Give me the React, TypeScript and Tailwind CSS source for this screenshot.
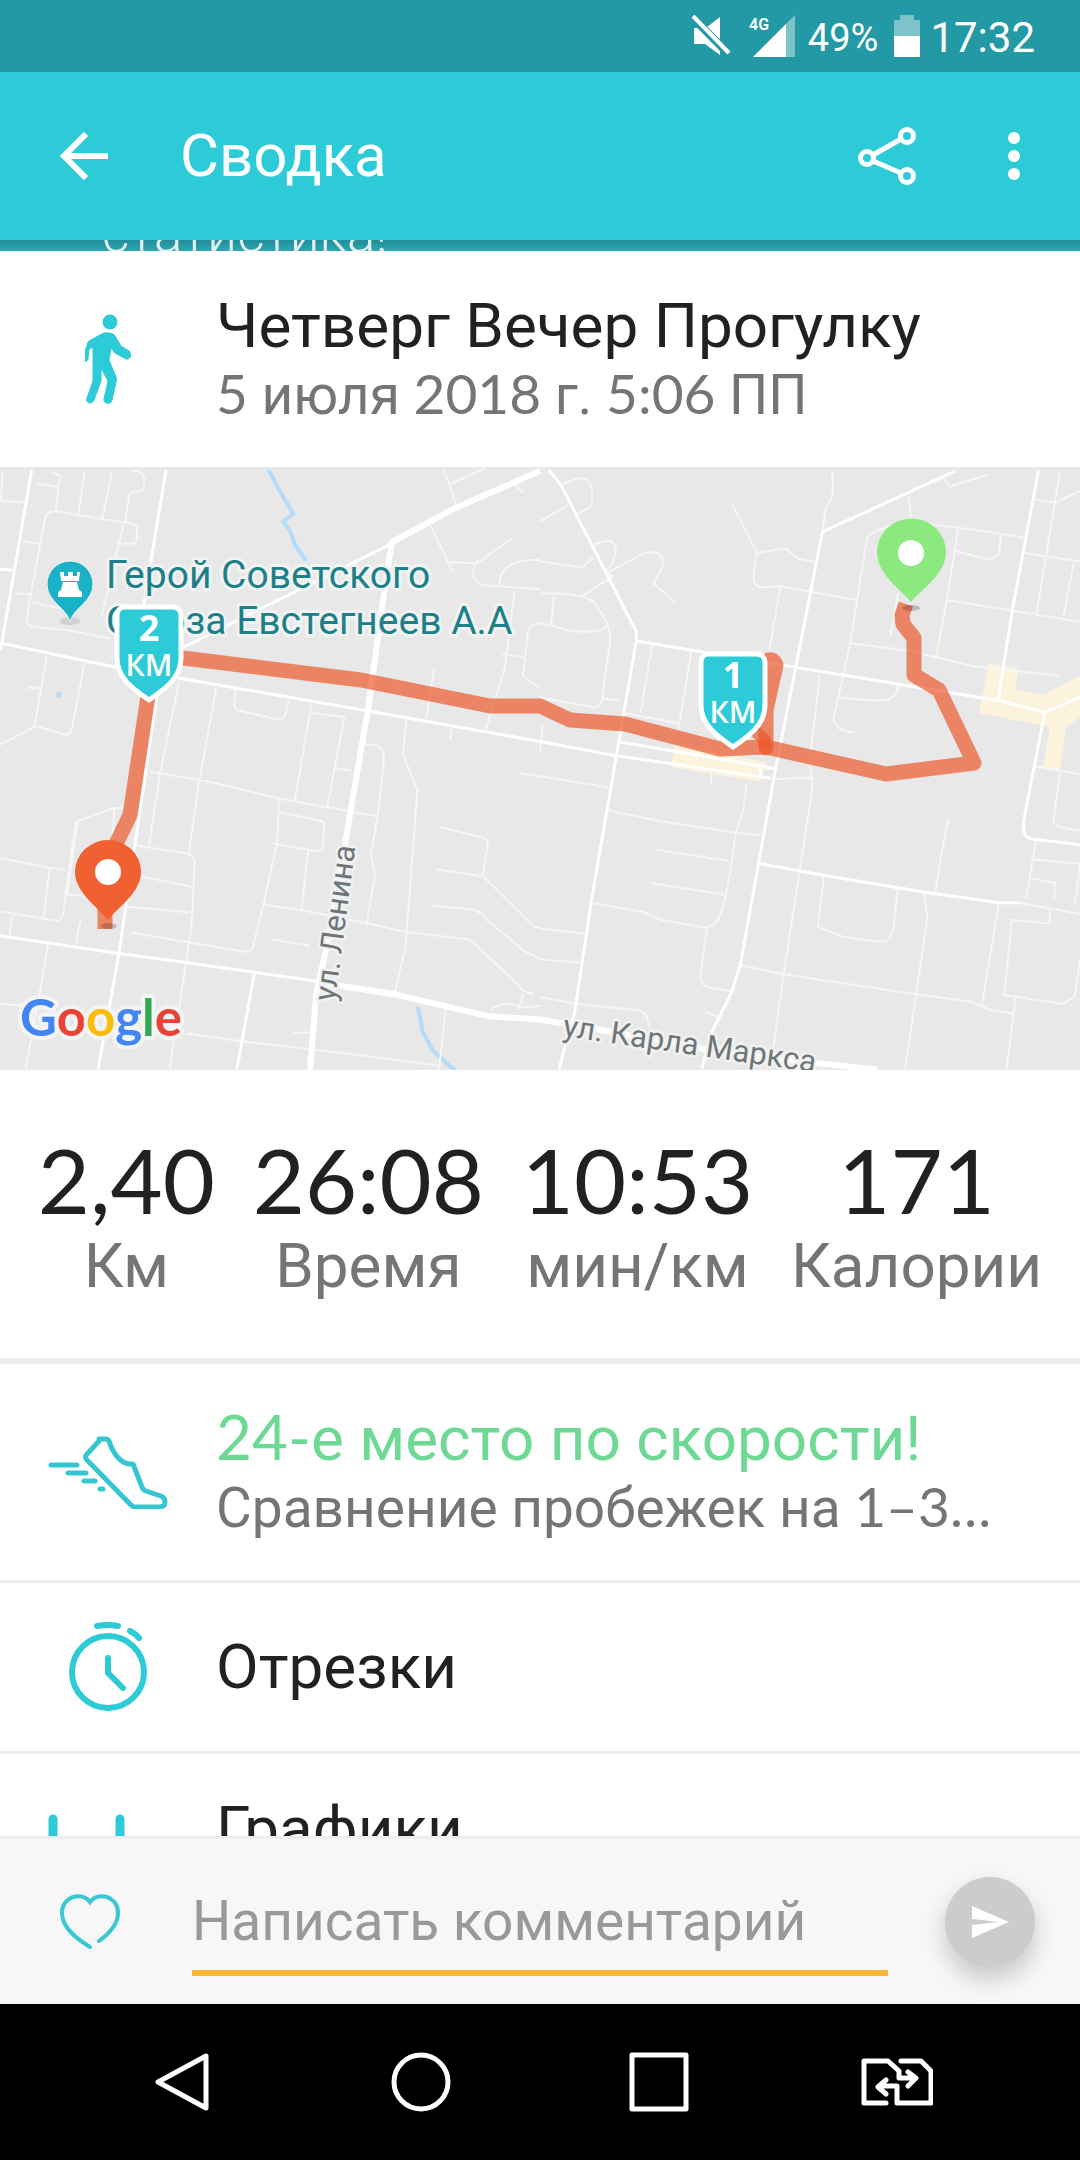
import type { ReactNode } from "react";

const Num = ({ children }: { children: ReactNode }) => (
  <span className="font-['Lato',sans-serif] leading-none font-normal">{children}</span>
);

function StatusBar() {
  return (
    <div className="flex h-[72px] shrink-0 items-center justify-end bg-[#2399a6] pr-[45px] text-white">
      <svg width="40" height="42" viewBox="0 0 40 42" fill="#fff" aria-label="Без звука">
        <path d="M29 2v25L16 12z" />
        <path d="M3 13h4l22 23v4L14 29H3z" />
        <path d="M1 2L38 39" stroke="#2399a6" strokeWidth="8" />
        <path d="M2 1L38 38" stroke="#fff" strokeWidth="4" />
      </svg>
      <svg className="ml-[17px]" width="48" height="42" viewBox="0 0 48 42" aria-label="4G">
        <path d="M47 0v42H5z" fill="#7fc3ca" />
        <path d="M38 9v33H5z" fill="#fff" />
        <text x="1" y="15" fontSize="16" fontWeight="600" fontFamily="Roboto, sans-serif" fill="#fff">4G</text>
      </svg>
      <span className="ml-3 pt-1 text-[38px] leading-[48px]">49%</span>
      <svg className="ml-4" width="26" height="42" viewBox="0 0 26 42" aria-label="Батарея">
        <path d="M6 0h14v5h6v37H0V5h6z" fill="#7fc3ca" />
        <path d="M0 21h26v21H0z" fill="#fff" />
      </svg>
      <span className="ml-2.5 pt-1 text-[42px] leading-[48px]">17:32</span>
    </div>
  );
}

function AppBar() {
  return (
    <header className="flex h-[168px] shrink-0 items-center bg-[#2dcad7] pr-[42px] pl-[60px] text-white">
      <button type="button" aria-label="Назад">
        <svg width="48" height="48" viewBox="0 0 48 48" fill="none" stroke="#fff" strokeWidth="6">
          <path d="M48 24H5M26 2L4 24l22 22" />
        </svg>
      </button>
      <h1 className="ml-[72px] flex-1 text-[60px] leading-[72px]">Сводка</h1>
      <button type="button" aria-label="Поделиться">
        <svg width="60" height="60" viewBox="0 0 60 60" fill="none" stroke="#fff" strokeWidth="5">
          <circle cx="10" cy="32" r="6.5" />
          <circle cx="50" cy="10" r="6.5" />
          <circle cx="50" cy="50" r="6.5" />
          <path d="M16 29l28-16M16 35l28 12" />
        </svg>
      </button>
      <button type="button" aria-label="Ещё" className="ml-[73px]">
        <svg width="48" height="48" viewBox="0 0 48 48" fill="#fff">
          <circle cx="24" cy="6" r="6" />
          <circle cx="24" cy="24" r="6" />
          <circle cx="24" cy="42" r="6" />
        </svg>
      </button>
    </header>
  );
}

const Shield = ({ n }: { n: string }) => (
  <>
    <path d="M9 2h49a8 8 0 0 1 8 8v43c0 20-16 31-32 42C18 84 2 73 2 53V10a8 8 0 0 1 7-8z" fill="#2dcad7" stroke="#fff" strokeWidth="5" />
    <text x="34" y="36" textAnchor="middle" fontSize="36" fontWeight="700" fontFamily="'Open Sans', sans-serif" fill="#fff">{n}</text>
    <text x="34" y="71" textAnchor="middle" fontSize="30" fontWeight="600" fontFamily="'Open Sans', sans-serif" fill="#fff">КМ</text>
  </>
);

function RouteMap() {
  const even = { vectorEffect: "non-scaling-stroke" as const };
  return (
    <svg
      className="block h-[603px] w-full shrink-0 bg-[#e8e8e8]"
      viewBox="0 0 1080 603"
      preserveAspectRatio="xMidYMid slice"
      role="img"
      aria-label="Карта маршрута"
      fill="none"
      fontFamily="Roboto, sans-serif"
    >
      <g transform="matrix(.3444 0 0 .3954 0 -7)" strokeLinejoin="round">
        <path {...even} stroke="#b3dbfa" strokeWidth="4" d="M780 25l30 50 42 62-30 18 22 28 12 30 32 42M1213 1383l8 30 5 30 30 50 66 52" />
        <path {...even} stroke="#b3dbfa" strokeWidth="5" d="M164 594h14" />
        <path
          {...even}
          stroke="#f6f6f6"
          strokeWidth="2"
          d="M8 25L3 103l70 5M110 60l60 8-8 62M150 30l25 10-5 28M245 30l-18 112M325 30l-28 122M380 27q40 0 38 20v20q0 12-20 12-25 0-25 20l-10 60M360 158q40 0 38 20v20q0 15-20 14l-40-3M85 360l45-210q5-22 35-20l195 28-65 240M65 205l50 7M45 337l45 3M92 360l110 20M85 355l-7 55q0 10 20 12l110 10 110 20M135 500l-35 175L0 720M100 672l90 22q15 0 20-20l35-160M80 576h35M520 560l-55 230-33 190M628 575l-50 240-30 180M685 580l-5 40q0 10 15 14l110 22q20 0 25-15l8-35M905 615l-50 250M905 640l95 10-50 228M430 788l175 25 200 42 60 10 230 36M810 855l-5 110-40 160-30 105q-3 15-30 13L380 1195M808 890l125 23q8 2 8 12l-3 50q-3 18-20 14l-128-19M895 988l-20 150M765 1125l110 13 170 30 130 25 190 20 140 115q15 20 45 22M790 1213l110 15M1055 720h30q30 5 30 35l-18 145-20 100 12 50-25 125M970 780l48 4M1180 655l-10 90 42 90-35 400-30 110M1250 165l65 120M1300 258l85 3 105-65M1385 255q-30 50 20 62l163 10M1450 318q0-70 118-65M1495 328l-30 200-55 155M1458 490l60 8M1568 415q-30-3-35 20l-15 110 50 34M1260 530l-22 125M1310 675l-2 35M1510 792l58 8M1280 928l120 27q18 5 16 20l-14 75q-5 5-20 0l-118-15M1400 1050l150 130 18 4M1252 1127l120 10q30 8 40 25l110 80 46 20M1285 25l15 25 28 75M1310 60l100-40M1490 60l30 22M332 880q-5 80-8 90M225 915l-30 185M0 1007l130 22 60 8M145 1030l-20 130M0 1142l170 24q15-3 20-66l30-185 110-35h30M190 1098l60 5M35 1152l-7 55M235 1160l-15 62M395 975l150 20q22 10 20 25l-8 150-20 120-45 250M395 1050l165 30M370 1130l180 14M140 1225l-65 315M0 1376l130 8M540 1450l160 20 320 32 260 30M850 1450l60-2M1295 1380l-20 160M1425 1395q10-20 50-20l45 10 48-5M1520 1350l-15 40"
        />
        <path {...even} stroke="#fff" strokeWidth="3" d="M92 25L2 480M482 25L400 460M0 276l35 2M0 463l330 60 200 30 540 82 498 77M455 600L345 1250l-60 290M0 1203l345 45 190 22 400 50M738 1300l-50 240M530 475l610-265" />
        <path {...even} stroke="#fff" strokeWidth="6" d="M1568 28l-250 95-180 85-15 80-55 345-110 560-40 160-18 190M930 1322l220 30 270 55 148 8" />
      </g>
      <g transform="matrix(.3444 0 0 .3954 540 -7)" strokeLinejoin="round">
        <path fill="#fbf3dc" d="M390 720l270 45-20 48-260-36zM1302 516l85 10-5 55 80 14 106-50v105l-40 25-18 110-50-4 20-105-205-36z" />
        <path
          {...even}
          stroke="#f6f6f6"
          strokeWidth="2"
          d="M60 65q70-35 85-5 15 35 0 60l-40 18M0 155l80-40M155 215q60-25 65 10 0 35-32 57M0 256l120 16 35-25M120 345l90-50-15-10 110-50q60-10 50 35l-25 42 65 50M0 338q160-5 170 40 40 40 32 90l-18 110q0 50-30 47L0 600M40 345l-8 70M0 412l90 20q90 8 105-12M183 603l50 5M8 670L0 740M325 470l-33 170M440 480l-38 200M240 640l160 25M558 112l72 123q80-12 85-10l35 25 50 8M630 235q-15 60-8 75 15 15 25 12l50-3 220 35M698 320l-32 160M848 28q5 50-2 70l-16 22-10 60M950 195l-50 270-48 190q5 30 60 34M950 195q40-30 130-38l230 25 98 15M1070 90l10 70M1170 45l20 22 110-30M1215 170l-35 190-30 140M1205 230l90 20q35 3 40-25l3-40M1180 354l388 55M1408 235l160 22M1510 28l-68 360M1550 260l-30 135M1438 100l60 8 70-30M1040 335l-22 110M895 463l180 20 180 38 255 25M1040 570q0 30-40 38-60 0-138-8M812 545l-30 230q10 10 8 60l-85 480-35 220M680 808q50-6 110-3M497 790v30M600 820q-8 80-30 115-30 200-55 230-20 20-40 17L350 1163l-50-20-145-22M0 800l200 28M190 885l170 30 210 28 70 6M340 986l210 28M320 1070l212 28M0 1185l130 13M0 1263l115 8M485 1185l-20 120q5 25 25 30l65 8M0 1358l105 17 190 18q20 10 20 40M480 1395l40 15M825 1050l-18 130 70 25q100 15 130 12 15-10 20-40l12-95M582 1278l120 22 380 50 170 20 60 22 60 8M1115 1095l10 60-35 210-30 175M1185 908l-20 90-18 100M1332 1125l-50 260M1380 1360l-25 180M1480 1135v38l-110-10-22 190 170 23 35-20 15-90M1440 960l-28 150M1430 1010l138 12-15 103M1425 1058l70 12-2 45M1510 790l-20 125q5 15 78 22M1440 775l128 20M1390 1120l178 28"
        />
        <path {...even} stroke="#fff" strokeWidth="3" d="M25 25q30 30 40 45l215 365v20L150 1110l-50 290-45 140M280 458l1050 150 135 30 103-38M1205 28L820 182 680 800l-98 475-25 70-60 105-27 90M0 712l215 35 455 58M225 712l455 68M640 775v28M1447 28l-75 350-42 230M1465 640l-60 270q-5 45 20 48l143 15M635 1020l200 32 310 45 190 23h58" />
        <path {...even} stroke="#fff" strokeWidth="6" d="M0 1415l200 30 340 55 440 42" />
      </g>

      <g strokeLinejoin="round" strokeWidth="15" stroke="#ec5a2c" strokeOpacity=".7">
        <path d="M906 137l-4 11 1 9 11 14v37l25 15 35 73-88 11-120-27-46 2-95-25-55-4-30-14h-50l-129-26-178-22-35-4v42l-18 119-15 31-10 30v53" />
        <path d="M766 281v-38l10-45q-3-8-10-4l-8 40" strokeLinecap="round" />
        <path d="M752 262l13 11v8" strokeLinecap="butt" strokeWidth="12" />
      </g>

      <g fontSize="39" fill="#1c8088" stroke="#f1f3f3" strokeWidth="6" paintOrder="stroke" strokeLinejoin="round">
        <text x="106" y="121">Герой Советского</text>
        <text x="106" y="167">Союза Евстегнеев А.А</text>
      </g>
      <g fontSize="31" fill="#6e7679" stroke="#f1f1f1" strokeWidth="5" paintOrder="stroke" strokeLinejoin="round">
        <text transform="translate(335 535) rotate(-82.5)">ул. Ленина</text>
        <text transform="translate(562 569) rotate(8.2)">ул. Карла Маркса</text>
      </g>
      <g fontSize="51" fontFamily="Lato, sans-serif" fontWeight="700" stroke="#f4f4f4" strokeWidth="8" paintOrder="stroke" strokeLinejoin="round">
        <text x="20" y="569">
          <tspan fill="#4285f4">G</tspan>
          <tspan fill="#ea4335">o</tspan>
          <tspan fill="#fbbc05">o</tspan>
          <tspan fill="#4285f4">g</tspan>
          <tspan fill="#34a853">l</tspan>
          <tspan fill="#ea4335">e</tspan>
        </text>
      </g>

      <ellipse cx="70" cy="154" rx="10" ry="4" fill="#d0d0d0" />
      <path d="M70 155c-3-14-23-20-23-38a23 23 0 0 1 46 0c0 18-20 24-23 38z" fill="#19b2c6" stroke="#eef3f3" strokeWidth="1" />
      <path fill="#fff" d="M60 105h4v4h4v-4h5v4h4v-4h3l-1 9H61zM63 115h14l2 8 3 2v5H58v-5l3-2z" />
      <g transform="translate(115 138)"><Shield n="2" /></g>
      <g transform="translate(699 185)"><Shield n="1" /></g>
      <ellipse cx="911" cy="141" rx="9" ry="3" fill="#000" fillOpacity=".2" />
      <path d="M911 135c-8-11-34-27-34-50a34 33 0 0 1 69 0c0 23-27 39-35 50z" fill="#8ce97f" />
      <circle cx="911" cy="86" r="13" fill="#fff" />
      <ellipse cx="109" cy="459" rx="8" ry="3" fill="#000" fillOpacity=".18" />
      <path d="M108 453c-8-11-33-27-33-48a33 32 0 0 1 66 0c0 21-25 37-33 48z" fill="#f06030" />
      <circle cx="108" cy="405" r="13" fill="#fff" />
    </svg>
  );
}

const stats: [string, string][] = [
  ["2,40", "Км"],
  ["26:08", "Время"],
  ["10:53", "мин/км"],
  ["171", "Калории"],
];

const IconCell = ({ children }: { children: ReactNode }) => (
  <div className="flex w-[216px] shrink-0 items-center pl-12">
    <div className="flex w-[120px] justify-center">{children}</div>
  </div>
);

const Walker = () => (
  <svg width="46" height="90" viewBox="0 0 46 90" fill="#2dcad7" stroke="#2dcad7" strokeLinecap="round" strokeLinejoin="round">
    <circle cx="25" cy="8" r="7.5" stroke="none" />
    <path
      strokeWidth="1"
      d="M20 19h5q3 0 5 3l6 10 8 5c4 3 1 9-3 8l-11-6-4-5-2 12 7 17q1 3 0 5l-4 18c-1 5-9 4-8-1l4-18-7-13v13l-7 19c-2 5-9 3-7-2l6-17V33l-4 2-1 9c0 5-7 5-7 0L2 32q0-3 2-5l11-6q2-2 5-2z"
    />
  </svg>
);

const Shoe = () => (
  <svg width="120" height="74" viewBox="0 0 120 74" fill="none" stroke="#35c6d2" strokeWidth="5" strokeLinecap="round" strokeLinejoin="round">
    <path d="M3 30h26M20 38h18M36 46h11M52 54h3" />
    <path d="M51 4h7q3 0 4 5c4 10 10 19 20 20h3l9 23q1 3 4 4l15 5c5 2 6 10-1 11H87q-2 0-4-2L39 25q-3-3 0-6L51 6z" />
  </svg>
);

const Stopwatch = () => (
  <svg width="78" height="90" viewBox="0 0 78 90" fill="none" stroke="#2dcad7" strokeWidth="6" strokeLinecap="round" strokeLinejoin="round">
    <circle cx="39" cy="50" r="36" />
    <path d="M28 4q11-2 21 0M61 9q6 3 9 7M39 36v15l15 15" />
  </svg>
);

const Bars = () => (
  <svg width="120" height="96" viewBox="0 0 120 96" fill="none" stroke="#2dcad7" strokeWidth="9" strokeLinecap="round">
    <path d="M5 5v86M72 5v86M38 45v46M106 35v56" />
  </svg>
);

export default function App() {
  return (
    <div className="flex h-screen flex-col overflow-hidden bg-white font-['Roboto',sans-serif] text-[#212121]">
      <StatusBar />
      <AppBar />
      <main className="flex min-h-0 flex-1 flex-col overflow-hidden">
        <div className="flex h-[11px] shrink-0 items-end overflow-hidden bg-linear-to-b from-[#238d98] to-[#2aa8b3] pl-[102px]">
          <p className="-mb-[13px] text-[53px] leading-[60px] font-light text-[#e4eeee]">статистика!</p>
        </div>

        <section className="flex h-[216px] shrink-0">
          <IconCell><Walker /></IconCell>
          <div className="flex min-w-0 flex-1 flex-col justify-center">
            <h2 className="text-[62px] leading-[72px] whitespace-nowrap">Четверг Вечер Прогулку</h2>
            <p className="text-[55px] leading-[66px] whitespace-nowrap text-[#757575]">
              <Num>5</Num> июля <Num>2018</Num> г. <Num>5:06</Num> ПП
            </p>
          </div>
        </section>

        <RouteMap />

        <dl className="flex h-[294px] shrink-0 justify-evenly border-b-6 border-[#eee] pt-16">
          {stats.map(([value, label]) => (
            <div key={label} className="flex flex-col-reverse justify-end text-center">
              <dt className="text-[62px] leading-[72px] text-[#757575]">{label}</dt>
              <dd className="text-[90px] leading-[92px]"><Num>{value}</Num></dd>
            </div>
          ))}
        </dl>

        <ul>
          <li className="flex h-[219px] border-b-3 border-[#eee]">
            <IconCell><Shoe /></IconCell>
            <div className="flex min-w-0 flex-1 flex-col justify-center">
              <h2 className="text-[62px] leading-[72px] whitespace-nowrap text-[#6dd994]"><Num>24-</Num>е место по скорости!</h2>
              <p className="text-[55px] leading-[66px] whitespace-nowrap text-[#757575]">Сравнение пробежек на <Num>1–3…</Num></p>
            </div>
          </li>
          <li className="flex h-[171px] items-center border-b-3 border-[#eee]">
            <IconCell><Stopwatch /></IconCell>
            <h2 className="text-[62px] leading-[72px]">Отрезки</h2>
          </li>
          <li className="flex h-[216px]">
            <IconCell><Bars /></IconCell>
            <h2 className="pt-[39px] text-[62px] leading-[72px]">Графики</h2>
          </li>
        </ul>
      </main>

      <form className="flex h-[168px] shrink-0 items-center border-t-3 border-[#eee] bg-[#f7f7f7] pr-[45px] pl-[60px]">
        <button type="button" aria-label="Нравится">
          <svg width="60" height="56" viewBox="0 0 60 56" fill="none" stroke="#38c8d4" strokeWidth="4" strokeLinecap="round">
            <path d="M30 53C17 45 2 34 2 19 2 2 22-3 30 8 38-3 58 2 58 19c0 11-8 20-19 28" />
          </svg>
        </button>
        <input
          type="text"
          aria-label="Комментарий"
          placeholder="Написать комментарий"
          className="ml-[72px] h-[108px] min-w-0 flex-1 border-b-6 border-[#fdb735] bg-transparent pt-1 text-[55px] text-[#212121] outline-none placeholder:text-[#999]"
        />
        <button type="submit" aria-label="Отправить" className="ml-[57px] flex size-[90px] items-center justify-center rounded-full bg-[#ccc] shadow-[0_12px_24px_rgba(0,0,0,0.2)]">
          <svg width="38" height="34" viewBox="0 0 38 34" fill="#fff">
            <path d="M1 1l37 16L1 33V20l26-3L1 14z" />
          </svg>
        </button>
      </form>

      <nav className="grid h-[156px] shrink-0 grid-cols-4 place-items-center bg-black px-16">
        <button type="button" aria-label="Системная кнопка «Назад»">
          <svg width="60" height="60" viewBox="0 0 60 60" fill="none" stroke="#fff" strokeWidth="5" strokeLinejoin="round">
            <path d="M53 4v52L5 30z" />
          </svg>
        </button>
        <button type="button" aria-label="Домой">
          <svg width="60" height="60" viewBox="0 0 60 60" fill="none" stroke="#fff" strokeWidth="5">
            <circle cx="30" cy="30" r="27" />
          </svg>
        </button>
        <button type="button" aria-label="Недавние">
          <svg width="60" height="60" viewBox="0 0 60 60" fill="none" stroke="#fff" strokeWidth="5" strokeLinejoin="round">
            <path d="M3 3h54v54H3z" />
          </svg>
        </button>
        <button type="button" aria-label="Переключить SIM">
          <svg width="72" height="48" viewBox="0 0 72 48" fill="none" stroke="#fff" strokeWidth="5" strokeLinecap="round" strokeLinejoin="round">
            <path d="M25 45H3V3h24l11 10v7h15M47 14l8 6-8 8M40 3h20l10 10v32H36V28H18M25 22l-8 7 8 7" />
          </svg>
        </button>
      </nav>
    </div>
  );
}
